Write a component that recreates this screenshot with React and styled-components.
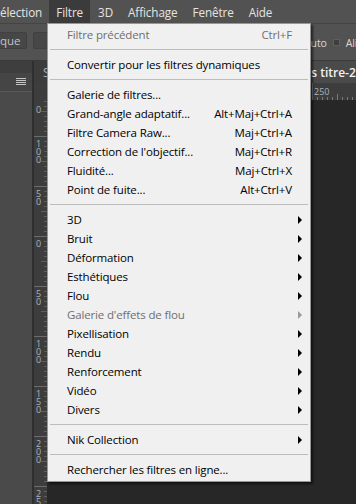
import React from "react";
import styled, { createGlobalStyle } from "styled-components";

const GlobalStyle = createGlobalStyle`
  html, body { margin: 0; padding: 0; background: #282828; }
  body { font-family: "Open Sans", "Noto Sans", sans-serif; }
  * { box-sizing: border-box; }
`;

const Page = styled.div`
  position: relative;
  width: 356px;
  height: 504px;
  overflow: hidden;
  display: flex;
  flex-direction: column;
  background: #282828;
`;

const MenuBar = styled.div`
  height: 24px;
  flex-shrink: 0;
  display: flex;
  gap: 1px;
  background: #525252;
  border-bottom: 1px solid #444;
  white-space: nowrap;
`;

const MenuBarItem = styled.div`
  display: flex;
  align-items: center;
  height: 23px;
  padding: ${(p) => (p.$first ? "0 6px 0 0" : "0 7px")};
  font-size: 11.7px;
  letter-spacing: -0.1px;
  color: #e4e4e4;
  background: ${(p) => (p.$active ? "#3b3b3b" : "transparent")};
`;

const OptionsBar = styled.div`
  height: 37px;
  flex-shrink: 0;
  display: flex;
  align-items: center;
  padding-bottom: 4px;
  background: #525252;
  border-bottom: 1px solid #3a3a3a;
  white-space: nowrap;
  overflow: hidden;
`;

const ToolButton = styled.div`
  flex-shrink: 0;
  height: 17px;
  display: flex;
  align-items: center;
  margin-left: ${(p) => p.$ml || 0}px;
  padding-left: ${(p) => p.$pl || 0}px;
  width: ${(p) => p.$w}px;
  background: #474747;
  border: 1px solid #404040;
  border-radius: 2px;
  font-size: 11.5px;
  color: #c4c4c4;
  overflow: hidden;
`;

const RightGroup = styled.div`
  margin-left: auto;
  width: 52px;
  flex-shrink: 0;
  display: flex;
  align-items: center;
  gap: 6px;
  overflow: hidden;
  font-size: 10.5px;
  letter-spacing: -0.1px;
  color: #d8d8d8;
  padding-top: 5px;
`;

const CheckBox = styled.span`
  flex-shrink: 0;
  width: 7px;
  height: 7px;
  background: #3e3e3e;
  border: 1px solid #5e5e5e;
`;

const Workspace = styled.div`
  flex: 1;
  display: flex;
  min-height: 0;
`;

const LeftPanel = styled.div`
  width: 34px;
  flex-shrink: 0;
  display: flex;
  flex-direction: column;
  background: #4a4a4a;
  border-right: 2px solid #2f2f2f;
`;

const PanelStrip = styled.div`
  height: 12px;
  background: #3e3e3e;
`;

const PanelHeader = styled.div`
  height: 19px;
  display: flex;
  align-items: center;
  justify-content: flex-end;
  padding-right: 6px;
  background: #454545;
  border-bottom: 1px solid #5a5a5a;
`;

const DocArea = styled.div`
  flex: 1;
  display: flex;
  flex-direction: column;
  min-width: 0;
`;

const TabBar = styled.div`
  height: 22px;
  flex-shrink: 0;
  display: flex;
  background: #3c3c3c;
  white-space: nowrap;
  overflow: hidden;
`;

const Tab = styled.div`
  flex-shrink: 0;
  width: ${(p) => (p.$w ? `${p.$w}px` : "auto")};
  display: flex;
  align-items: center;
  padding-left: 9px;
  padding-right: 10px;
  font-size: 12px;
  font-weight: ${(p) => (p.$active ? 600 : 400)};
  color: ${(p) => (p.$active ? "#f2f2f2" : "#a9b0b8")};
  background: ${(p) => (p.$active ? "#4a4a4a" : "#3c3c3c")};
`;

const RulerRow = styled.div`
  height: 17px;
  flex-shrink: 0;
  display: flex;
`;

const RulerCorner = styled.div`
  width: 13px;
  flex-shrink: 0;
  background: #3d3d3d;
`;

const HRuler = styled.div`
  flex: 1;
  background: #3d3d3d;
  overflow: hidden;
  svg { display: block; }
`;

const CanvasRow = styled.div`
  flex: 1;
  display: flex;
  min-height: 0;
`;

const VRuler = styled.div`
  width: 13px;
  flex-shrink: 0;
  background: #3d3d3d;
  overflow: hidden;
  svg { display: block; }
`;

const Canvas = styled.div`
  flex: 1;
  background: #272727;
`;

const Dropdown = styled.div`
  position: absolute;
  top: 23px;
  left: 47px;
  width: 264px;
  padding: 1px 0 2px;
  background: #f0f0f0;
  border: 1px solid #979797;
  box-shadow: 2px 2px 2px rgba(0, 0, 0, 0.55);
  font-size: 11.5px;
  letter-spacing: -0.15px;
  white-space: nowrap;
`;

const Item = styled.div`
  height: 19px;
  display: flex;
  align-items: center;
  padding: 0 8px 0 19px;
  color: ${(p) => (p.$disabled ? "#6f6f6f" : "#000")};
`;

const Label = styled.span`
  flex: 1;
`;

const Shortcut = styled.span`
  margin-right: 6px;
`;

const ArrowSlot = styled.span`
  width: 4px;
  height: 8px;
  display: flex;
  svg { display: block; }
`;

const Separator = styled.div`
  height: 1px;
  margin: 5px 2px;
  background: #bcbcbc;
`;

const Arrow = ({ disabled }) => (
  <svg width="4" height="8" viewBox="0 0 4 8">
    <polygon points="0,0 4,4 0,8" fill={disabled ? "#9a9a9a" : "#000"} />
  </svg>
);

const Hamburger = () => (
  <svg width="10" height="8" viewBox="0 0 10 8">
    {[0.5, 2.5, 4.5, 6.5].map((y) => (
      <line key={y} x1="0" x2="10" y1={y} y2={y} stroke="#c6c6c6" strokeWidth="1" />
    ))}
  </svg>
);

const HRulerSvg = () => {
  const w = 309;
  const ticks = [];
  for (let x = 15; x <= w; x += 5) {
    const v = x - 15;
    const major = v % 50 === 0;
    const mid = v % 25 === 0;
    const h = major ? 17 : mid ? 6 : 3;
    ticks.push(
      <line key={"t" + x} x1={x + 0.5} x2={x + 0.5} y1={17 - h} y2={17} stroke="#7a7a7a" strokeWidth="1" />
    );
    if (major && x >= 260) {
      ticks.push(
        <text key={"l" + x} x={x + 2} y={12} fontSize="9" fill="#a9b3bd" fontFamily="Open Sans, sans-serif">
          {Math.abs(v)}
        </text>
      );
    }
  }
  return (
    <svg width={w} height="17" viewBox={`0 0 ${w} 17`}>
      {ticks}
    </svg>
  );
};

const VRulerSvg = () => {
  const h = 404;
  const items = [];
  for (let y = -14; y <= h; y += 5) {
    const v = y - 136;
    const major = v % 50 === 0;
    const mid = v % 25 === 0;
    const len = major ? 13 : mid ? 6 : 3;
    if (y >= 0) {
      items.push(
        <line key={"t" + y} x1={13 - len} x2={13} y1={y + 0.5} y2={y + 0.5} stroke={major ? "#6c6c6c" : "#5f5f5f"} strokeWidth="1" />
      );
    }
    if (major) {
      const digits = String(Math.abs(v)).split("");
      digits.forEach((d, i) => {
        const base = y + 11 + i * 8;
        if (base < 6) return;
        items.push(
          <text key={"d" + y + "-" + i} x={2} y={base} fontSize="9" fill="#a9b3bd" fontFamily="Open Sans, sans-serif">
            {d}
          </text>
        );
      });
    }
  }
  return (
    <svg width="13" height={h} viewBox={`0 0 13 ${h}`}>
      {items}
    </svg>
  );
};

const menu = [
  { label: "Filtre précédent", shortcut: "Ctrl+F", disabled: true },
  { sep: true },
  { label: "Convertir pour les filtres dynamiques" },
  { sep: true },
  { label: "Galerie de filtres..." },
  { label: "Grand-angle adaptatif...", shortcut: "Alt+Maj+Ctrl+A" },
  { label: "Filtre Camera Raw...", shortcut: "Maj+Ctrl+A" },
  { label: "Correction de l'objectif...", shortcut: "Maj+Ctrl+R" },
  { label: "Fluidité...", shortcut: "Maj+Ctrl+X" },
  { label: "Point de fuite...", shortcut: "Alt+Ctrl+V" },
  { sep: true },
  { label: "3D", sub: true },
  { label: "Bruit", sub: true },
  { label: "Déformation", sub: true },
  { label: "Esthétiques", sub: true },
  { label: "Flou", sub: true },
  { label: "Galerie d'effets de flou", sub: true, disabled: true },
  { label: "Pixellisation", sub: true },
  { label: "Rendu", sub: true },
  { label: "Renforcement", sub: true },
  { label: "Vidéo", sub: true },
  { label: "Divers", sub: true },
  { sep: true },
  { label: "Nik Collection", sub: true },
  { sep: true },
  { label: "Rechercher les filtres en ligne..." },
];

export default function App() {
  return (
    <>
      <GlobalStyle />
      <Page>
        <MenuBar>
          <MenuBarItem $first>élection</MenuBarItem>
          <MenuBarItem $active>Filtre</MenuBarItem>
          <MenuBarItem>3D</MenuBarItem>
          <MenuBarItem>Affichage</MenuBarItem>
          <MenuBarItem>Fenêtre</MenuBarItem>
          <MenuBarItem>Aide</MenuBarItem>
        </MenuBar>
        <OptionsBar>
          <ToolButton $ml={-1} $pl={0} $w={28}>que</ToolButton>
          <ToolButton $ml={6} $w={60} />
          <RightGroup>
            <span>Auto</span>
            <CheckBox />
            <span>Aligner</span>
          </RightGroup>
        </OptionsBar>
        <Workspace>
          <LeftPanel>
            <PanelStrip />
            <PanelHeader>
              <Hamburger />
            </PanelHeader>
          </LeftPanel>
          <DocArea>
            <TabBar>
              <Tab $w={247}>Sans titre-1 @ 66,7% (RVB/8)</Tab>
              <Tab $active>Sans titre-2 @ 66,7% (RVB/8)</Tab>
            </TabBar>
            <RulerRow>
              <RulerCorner />
              <HRuler>
                <HRulerSvg />
              </HRuler>
            </RulerRow>
            <CanvasRow>
              <VRuler>
                <VRulerSvg />
              </VRuler>
              <Canvas />
            </CanvasRow>
          </DocArea>
        </Workspace>
        <Dropdown>
          {menu.map((m, i) =>
            m.sep ? (
              <Separator key={i} />
            ) : (
              <Item key={i} $disabled={m.disabled}>
                <Label>{m.label}</Label>
                {m.shortcut && <Shortcut>{m.shortcut}</Shortcut>}
                <ArrowSlot>{m.sub && <Arrow disabled={m.disabled} />}</ArrowSlot>
              </Item>
            )
          )}
        </Dropdown>
      </Page>
    </>
  );
}
